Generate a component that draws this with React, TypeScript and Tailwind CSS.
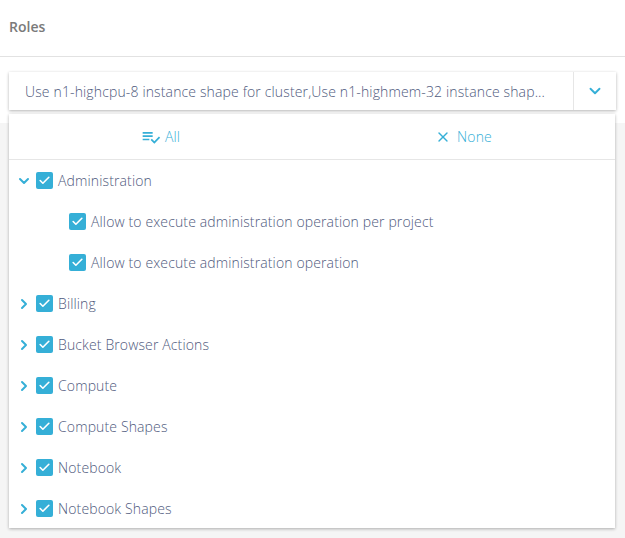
import { ChevronDown, ChevronRight, Check, X } from 'lucide-react';

const GROUPS = [
  {
    name: 'Administration',
    open: true,
    children: [
      'Allow to execute administration operation per project',
      'Allow to execute administration operation'
    ]
  },
  { name: 'Billing', open: false, children: [] },
  { name: 'Bucket Browser Actions', open: false, children: [] },
  { name: 'Compute', open: false, children: [] },
  { name: 'Compute Shapes', open: false, children: [] },
  { name: 'Notebook', open: false, children: [] },
  { name: 'Notebook Shapes', open: false, children: [] }
];

function Box() {
  return (
    <span className="w-[17px] h-[17px] rounded-[2px] bg-[#35afd7] flex items-center justify-center shrink-0">
      <Check size={13} strokeWidth={3} className="text-white" />
    </span>
  );
}

function PlaylistCheck() {
  return (
    <svg width="20" height="20" viewBox="0 0 24 24" fill="currentColor">
      <path d="M14 10H2v2h12v-2zm0-4H2v2h12V6zM2 16h8v-2H2v2zm19.5-4.5L23 13l-6.99 7-4.51-4.5L13 14l3.01 3 5.49-5.5z" />
    </svg>
  );
}

export default function App() {
  return (
    <div className="min-h-[538px] bg-[#f5f5f5] font-['Open_Sans',sans-serif] relative">
      {/* Header */}
      <div className="bg-white">
        <div className="h-[57px] px-[9px] pb-[4px] flex items-center border-b border-[#e2e2e2]">
          <span className="text-[14px] font-semibold text-[#7a7a7a]">Roles</span>
        </div>
        <div className="px-[9px] pt-[15px] pb-[13px]">
          <div className="h-[38px] bg-white flex items-center shadow-[0_1px_3px_rgba(0,0,0,0.3)]">
            <span className="flex-1 pl-4 text-[14px] font-light tracking-[0.14px] text-[#4f5a7d] whitespace-nowrap overflow-hidden">
              Use n1-highcpu-8 instance shape for cluster,Use n1-highmem-32 instance shap...
            </span>
            <div className="w-[43px] h-full border-l border-[#e6e6e6] flex items-center justify-center">
              <ChevronDown size={18} strokeWidth={2.5} className="text-[#35afd7]" />
            </div>
          </div>
        </div>
      </div>

      {/* Dropdown */}
      <div className="absolute left-[9px] top-[114px] w-[606px] h-[414px] bg-white overflow-hidden shadow-[0_1px_3px_rgba(0,0,0,0.3)]">
        <div className="h-[46px] flex border-b border-[#e6e6e6]">
          <button className="flex-1 flex items-center justify-center gap-1 text-[14px] font-light tracking-[0.14px] text-[#35afd7]">
            <PlaylistCheck />
            All
          </button>
          <button className="flex-1 flex items-center justify-center gap-1.5 text-[14px] font-light tracking-[0.14px] text-[#35afd7]">
            <X size={16} strokeWidth={2} />
            None
          </button>
        </div>
        {GROUPS.map((g) => (
          <div key={g.name}>
            <div className="h-[41px] flex items-center pl-[5px] gap-[3px] text-[14px] font-light tracking-[0.13px] text-[#4f5a7d]">
              <span className="w-[19px] flex justify-center text-[#35afd7]">
                {g.open ? (
                  <ChevronDown size={16} strokeWidth={3} />
                ) : (
                  <ChevronRight size={16} strokeWidth={3} />
                )}
              </span>
              <Box />
              <span className="ml-[2px]">{g.name}</span>
            </div>
            {g.children.map((c) => (
              <div key={c} className="h-[41px] flex items-center pl-[60px] gap-[5px] text-[14px] font-light tracking-[0.13px] text-[#4f5a7d]">
                <Box />
                <span>{c}</span>
              </div>
            ))}
          </div>
        ))}
      </div>
    </div>
  );
}
